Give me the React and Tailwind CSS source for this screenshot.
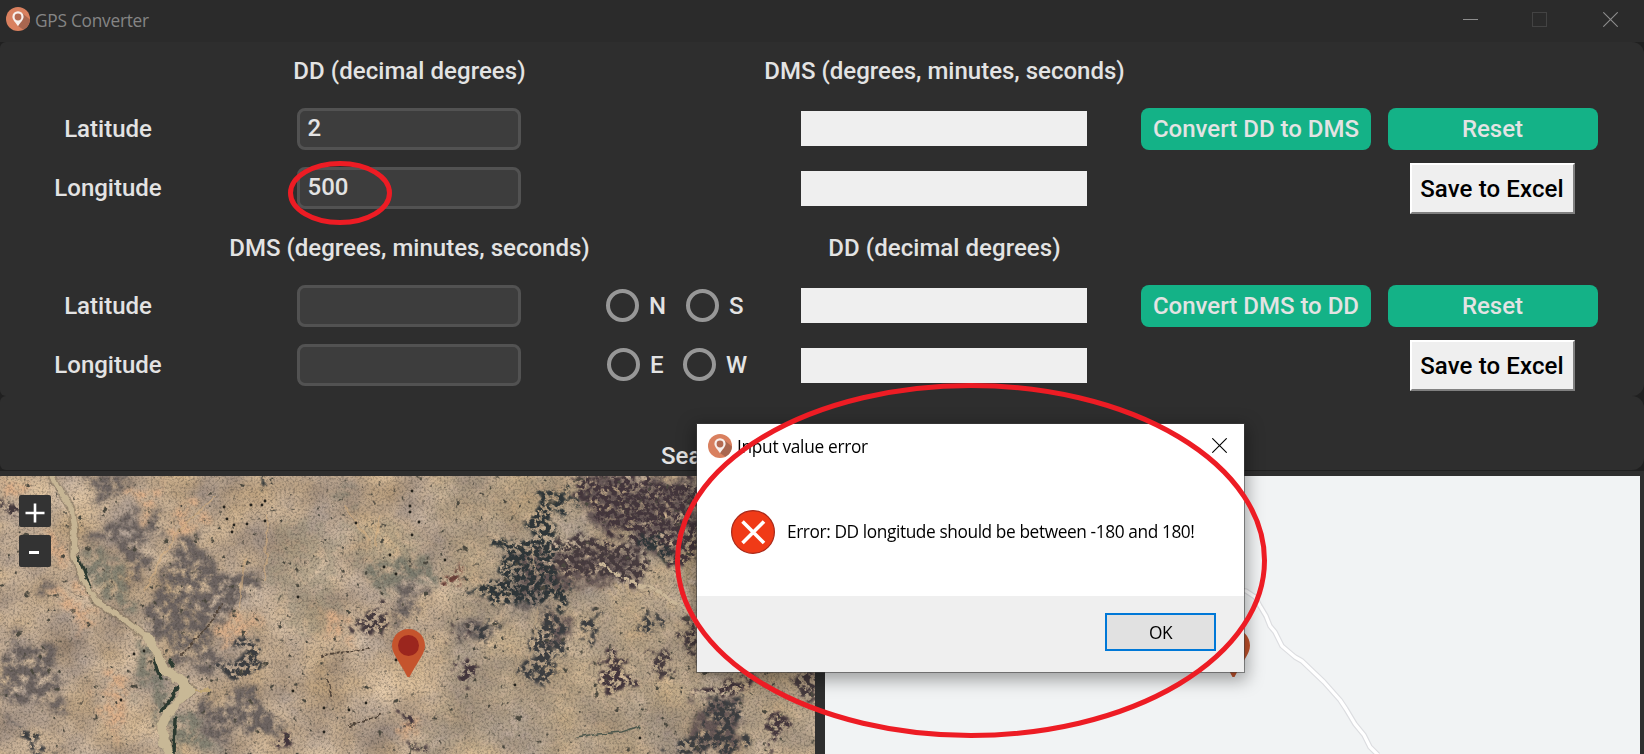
import React from "react";

const SANS = "font-['Open_Sans','Noto_Sans',sans-serif]";

function AppIcon() {
  return (
    <svg className="size-6 shrink-0" viewBox="0 0 24 24">
      <defs>
        <clipPath id="disc"><circle cx="12" cy="12" r="12" /></clipPath>
      </defs>
      <circle cx="12" cy="12" r="12" fill="#d9805f" />
      <path d="M16 6 L26 14 L22 26 L12 19 Z" fill="#a9664f" clipPath="url(#disc)" />
      <path d="M12 19.200 C10 16 6.400 13 6.400 9.800 A5.600 5.600 0 0 1 17.600 9.800 C17.600 13 14 16 12 19.200Z" fill="#f7efec" />
      <circle cx="12" cy="10" r="3.400" fill="#b46a52" />
    </svg>
  );
}

function Cross({ className }) {
  return (
    <svg className={className} viewBox="0 0 15 15" fill="none" stroke="currentColor" strokeWidth="1.100">
      <path d="M.3.3l14.400 14.400M14.700.3L.3 14.700" />
    </svg>
  );
}

function TitleBar() {
  return (
    <header className="flex h-[42px] items-center justify-between bg-[#2b2b2b] pr-[26px] pl-[6px] font-normal">
      <div className="flex items-center gap-[5px] pb-1">
        <AppIcon />
        <span className={`${SANS} pt-[3px] text-[17.300px] leading-6 tracking-[-0.250px] text-[#858585]`}>GPS Converter</span>
      </div>
      <div className="flex items-center pb-[3px] text-[#8d8d8d]">
        <span className="mr-[54px] h-px w-[15px] bg-[#8d8d8d]" />
        <span className="mr-[56px] size-[15px] border border-[#434343]" />
        <Cross className="size-[15px]" />
      </div>
    </header>
  );
}

function Entry({ value = "" }) {
  return (
    <div className="mx-auto flex h-[42px] w-[224px] items-center rounded-lg border-3 border-[#525252] bg-[#3d3d3d] pb-0.5 pl-2">{value}</div>
  );
}

function Output({ className = "" }) {
  return <div className={`mx-auto h-[35px] w-[286px] bg-[#efefef] ${className}`} />;
}

function Radio({ label, className = "" }) {
  return (
    <label className={`flex items-center gap-[10px] ${className}`}>
      <span className="mb-px size-[33px] rounded-full border-4 border-[#979797]" />
      {label}
    </label>
  );
}

function GreenButton({ children, className }) {
  return (
    <button className={`mx-auto h-[42px] rounded-lg bg-[#14b287] text-center ${className}`}>{children}</button>
  );
}

function SaveButton() {
  return (
    <button className="mx-auto h-[51px] w-[165px] border-2 border-t-white border-r-[#808080] border-b-[#808080] border-l-white bg-[#efefef] pt-px pr-px text-center tracking-[0.120px] text-black">
      Save to Excel
    </button>
  );
}

function Converter() {
  return (
    <section className="grid h-[354px] grid-cols-[216px_385px_156px_374px_250px_223px] grid-rows-[57px_60px_58px_60px_58px_60px] items-center rounded-r-xl rounded-l-md bg-[#2e2e2e] whitespace-nowrap">
      <span />
      <h2 className="pl-0.5 text-center tracking-[0.050px]">DD (decimal degrees)</h2>
      <span />
      <h2 className="pl-px text-center">DMS (degrees, minutes, seconds)</h2>
      <span />
      <span />

      <span className="text-center">Latitude</span>
      <Entry value="2" />
      <span />
      <Output className="mb-px" />
      <GreenButton className="w-[230px]">Convert DD to DMS</GreenButton>
      <GreenButton className="w-[210px]">Reset</GreenButton>

      <span className="text-center">Longitude</span>
      <Entry value="500" />
      <span />
      <Output />
      <span />
      <SaveButton />

      <span />
      <h2 className="pt-px pl-0.5 text-center">DMS (degrees, minutes, seconds)</h2>
      <span />
      <h2 className="pt-px pl-px text-center tracking-[0.050px]">DD (decimal degrees)</h2>
      <span />
      <span />

      <span className="text-center">Latitude</span>
      <Entry />
      <div className="flex pl-[5px]">
        <Radio label="N" className="w-20" />
        <Radio label="S" />
      </div>
      <Output className="mb-px" />
      <GreenButton className="w-[230px]">Convert DMS to DD</GreenButton>
      <GreenButton className="w-[210px]">Reset</GreenButton>

      <span className="text-center">Longitude</span>
      <Entry />
      <div className="flex pl-[6px]">
        <Radio label="E" className="w-[76px]" />
        <Radio label="W" />
      </div>
      <Output />
      <span />
      <SaveButton />
    </section>
  );
}

function Pin({ className }) {
  return (
    <svg className={`absolute h-12 w-[33px] ${className}`} viewBox="0 0 33 48">
      <path d="M16.500 0 A16.500 16.500 0 0 1 33 16.500 C33 25 25 33 17.500 48 H15.500 C8 33 0 25 0 16.500 A16.500 16.500 0 0 1 16.500 0Z" fill="#c5542d" />
      <circle cx="16.500" cy="16.500" r="10.500" fill="#9b261e" />
    </svg>
  );
}

const SCRUB = [
  "M90 0H130L122 18L104 26L92 12Z",
  "M88 58L110 48L160 38L168 52L150 62L146 84L138 105L130 96L128 78L110 66L95 72Z",
  "M178 60L196 52L204 72L216 95L240 96L258 92L262 112L236 128L218 150L205 170L188 186L170 178L155 160L148 138L152 112L165 90Z",
  "M190 180L215 172L228 190L215 200L195 198Z",
  "M0 190L20 160L45 165L60 190L52 215L28 240L10 230L0 225Z",
  "M35 112L50 108L48 124L28 120Z",
  "M50 210L70 230L66 244L54 228Z",
  "M196 238L215 222L245 212L275 235L280 262L262 256L240 250L226 266L218 278L205 255Z",
  "M382 145L400 112L420 98L420 130L405 150Z",
  "M450 165L480 145L510 138L490 155L478 168Z",
  "M508 120L548 112L552 136L536 140L512 132Z",
];

const GREENERY = [
  "M80 76L110 80L132 98L130 120L145 150L130 140L104 116L90 112Z",
  "M130 160L152 168L158 200L176 210L165 235L148 250L142 212L135 188Z",
  "M365 90L400 80L420 90L418 120L395 116L372 110Z",
  "M172 240L195 230L205 265L218 278H170Z",
  "M340 10L356 15L352 30L334 20Z",
  "M400 90L420 80L440 85L425 110L405 115Z",
];

const DARK = [
  "M352 148L370 135L392 128L388 148L376 164L362 156Z",
  "M233 182L244 163L258 168L262 180L254 198L238 205L215 202L222 190Z",
  "M570 0H697V88L672 92L660 70L630 65L600 48L590 30Z",
  "M545 66L570 62L600 62L640 70L650 100L640 112L610 100L560 100L545 96Z",
  "M548 135L567 140L565 170L548 178L560 195L545 205L526 208L524 185L535 155Z",
  "M595 186L612 172L625 178L630 200L620 220L604 212Z",
  "M652 178L666 174L674 200L664 198L650 192Z",
  "M582 140L596 134L598 160L588 166Z",
  "M454 190L472 182L478 196L470 212L456 200Z",
  "M448 162L466 150L480 140L478 154L462 160Z",
  "M472 148L500 142L490 160L476 168Z",
  "M690 215L720 205L745 198L765 206L735 218L700 220Z",
  "M792 198H815V228L800 220Z",
  "M708 220L740 228L742 278H670L690 258L712 248Z",
  "M772 236L790 238L782 256L770 278H765Z",
  "M680 138L697 140V190L688 184Z",
  "M640 145L660 135L655 152L628 152Z",
  "M402 242L414 240L412 250L394 252Z",
  "M408 270L425 266L430 278H408Z",
  "M14 250L24 250L45 272L58 278H36Z",
  "M280 254L286 250L288 270L274 276Z",
  "M0 18L14 24L16 38L6 44L0 36Z",
];

const INK = [
  "M530 18L548 14L560 22L575 14L582 20L560 32L550 50L558 64L552 84L548 95L575 112L520 125L478 124L502 100L505 88L498 72L520 58L532 64L530 44L536 30Z",
  "M476 108L520 100L575 116L560 128L500 128L470 122Z",
  "M636 56L668 64L668 90L656 80L640 70Z",
  "M260 0H268V12L262 10Z",
];

const LIGHT = [
  "M0 0H28L20 22L8 16Z",
  "M130 8L165 2L160 24L142 40L132 28Z",
  "M176 30L212 22L200 38L178 58L160 92L146 122L168 74Z",
  "M220 136L262 134L258 158L240 162L226 176L218 160Z",
  "M55 110L88 124L98 145L80 160L70 138L50 118Z",
  "M108 190L134 210L130 240L110 260L98 236Z",
  "M36 60L62 62L66 84L40 82Z",
  "M336 138L350 136L350 160L330 160Z",
  "M400 245L420 242L418 262L398 258Z",
];

const TREES = [[227, 43], [224, 31], [251, 29], [262, 29], [265, 25], [265, 45], [247, 48], [232, 56], [234, 49], [356, 47], [412, 15], [410, 36], [390, 79], [384, 91], [396, 98], [134, 178], [144, 175], [396, 184], [121, 224], [366, 227], [324, 232], [349, 234], [324, 256], [412, 59], [419, 46], [410, 30], [445, 84], [640, 262], [515, 209], [410, 158], [293, 215], [298, 121]];

const RIVER = "M52 0L62 16L71 32L75 60L74 80L83 104L94 122L111 136L129 147L148 162L157 176L164 194L180 204L193 215L180 224L167 238L162 250L163 264L171 280";

function Satellite() {
  return (
    <svg className="block h-full w-full" viewBox="0 0 815 278" preserveAspectRatio="xMinYMin slice">
      <defs>
        <filter id="ground" x="0" y="0" width="100%" height="100%" colorInterpolationFilters="sRGB">
          <feTurbulence type="fractalNoise" baseFrequency="0.02 0.022" numOctaves="7" seed="8" />
          <feColorMatrix values="0.38 0 0 0 0.565  0.32 0.06 0 0 0.475  0.20 0.18 0 0 0.375  0 0 0 0 1" />
        </filter>
        <filter id="grain" x="0" y="0" width="100%" height="100%" colorInterpolationFilters="sRGB">
          <feTurbulence type="fractalNoise" baseFrequency="0.45" numOctaves="3" seed="4" />
          <feColorMatrix values="0 0 0 0 0.24  0 0 0 0 0.22  0 0 0 0 0.2  1 0 0 0 -0.430" />
        </filter>
        <filter id="soft" x="-10%" y="-10%" width="120%" height="120%" colorInterpolationFilters="sRGB">
          <feTurbulence type="fractalNoise" baseFrequency="0.05" numOctaves="5" seed="3" result="n" />
          <feDisplacementMap in="SourceGraphic" in2="n" scale="40" xChannelSelector="R" yChannelSelector="G" result="d" />
          <feGaussianBlur in="d" stdDeviation="2" result="b" />
          <feTurbulence type="fractalNoise" baseFrequency="0.11" numOctaves="5" seed="7" result="m" />
          <feColorMatrix in="m" values="0 0 0 0 0  0 0 0 0 0  0 0 0 0 0  2.800 0 0 0 -0.650" result="mask" />
          <feComposite in="b" in2="mask" operator="in" />
        </filter>
        <filter id="speckle" x="-10%" y="-10%" width="120%" height="120%" colorInterpolationFilters="sRGB">
          <feTurbulence type="fractalNoise" baseFrequency="0.07" numOctaves="5" seed="11" result="n" />
          <feDisplacementMap in="SourceGraphic" in2="n" scale="34" xChannelSelector="R" yChannelSelector="G" result="d" />
          <feGaussianBlur in="d" stdDeviation="1.200" result="b" />
          <feTurbulence type="fractalNoise" baseFrequency="0.2" numOctaves="4" seed="21" result="m" />
          <feColorMatrix in="m" values="0 0 0 0 0  0 0 0 0 0  0 0 0 0 0  7 0 0 0 -2.850" result="mask" />
          <feComposite in="b" in2="mask" operator="in" />
        </filter>
        <filter id="wobble" x="-10%" y="-10%" width="120%" height="120%" colorInterpolationFilters="sRGB">
          <feTurbulence type="fractalNoise" baseFrequency="0.09" numOctaves="3" seed="5" result="n" />
          <feDisplacementMap in="SourceGraphic" in2="n" scale="7" xChannelSelector="R" yChannelSelector="G" />
        </filter>
        <filter id="scatter" x="0" y="0" width="100%" height="100%" colorInterpolationFilters="sRGB">
          <feTurbulence type="fractalNoise" baseFrequency="0.13" numOctaves="3" seed="31" />
          <feColorMatrix values="0 0 0 0 0.3  0 0 0 0 0.29  0 0 0 0 0.25  9 0 0 0 -6.300" />
        </filter>
      </defs>
      <rect width="815" height="278" filter="url(#ground)" />
      <g filter="url(#soft)">
        <path d="M430 0H815V278H420L450 160Z" fill="#9d9177" opacity=".4" />
        <path d="M280 40L340 60L330 150L300 160L270 110Z M340 50L420 50V88L360 90Z" fill="#9d9680" opacity=".5" />
        {LIGHT.map((d) => <path key={d} d={d} fill="#dcb08a" />)}
        {GREENERY.map((d) => <path key={d} d={d} fill="#7a7b6d" opacity=".85" />)}
        {SCRUB.map((d) => <path key={d} d={d} fill="#6e6562" />)}
        <path d="M540 100L560 85L640 105L690 130L640 122Z" fill="#c9b08d" />
        <path d="M676 60L697 54V124L684 110Z" fill="#b09a7a" />
      </g>
      <g filter="url(#soft)" opacity=".85">
        <path d="M570 0H697V60L668 84L600 48Z M506 76L640 70L640 104L520 116Z M700 226H740V278H684Z M548 140H566V172H546Z" fill="#5b4d50" />
      </g>
      <g filter="url(#speckle)">
        {DARK.map((d, i) => <path key={d} d={d} fill={i % 3 === 0 ? "#463a3e" : i % 3 === 1 ? "#3b3d40" : "#43353c"} />)}
        {INK.map((d) => <path key={d} d={d} fill="#2d3538" />)}
        <path d="M437 106L464 86L462 98L444 114Z" fill="#6d3f38" />
      </g>
      <rect width="815" height="278" filter="url(#scatter)" />
      <rect width="815" height="278" filter="url(#grain)" />
      <g fill="none" strokeLinecap="round" strokeLinejoin="round" filter="url(#wobble)">
        <path d="M215 22L180 52L160 85L145 115M244 84L240 130M268 40L265 104M380 40L375 70M345 30L370 65" stroke="#d2ad80" strokeWidth="2" opacity=".6" />
        <path d="M600 88L625 104L655 114L690 135" stroke="#cbb899" strokeWidth="3" strokeDasharray="5 4" />
        <path d="M532 70L536 98M538 132L530 190" stroke="#baa384" strokeWidth="2" opacity=".7" />
        <path d="M322 180L340 176L368 172M350 250L382 238M180 178L208 152L222 128M328 204L330 220" stroke="#514439" strokeWidth="2" strokeDasharray="2 3" />
        <path d="M576 262L600 258L622 256L640 250" stroke="#4d574c" strokeWidth="1.600" />
        <path d={RIVER} stroke="#7d7059" strokeWidth="9" opacity=".5" />
        <path d="M78 82L85 98L90 112M154 182L157 194L161 202M179 210L170 224L160 236M169 184L173 192M175 242L174 278" stroke="#2c3a30" strokeWidth="3.500" />
        <path d={RIVER} stroke="#c6b594" strokeWidth="5.500" />
        <path d="M148 162L157 176L164 194L180 204L190 215L180 224L167 238L162 250L163 264L171 280" stroke="#c8b896" strokeWidth="9" />
        <path d="M182 206L193 215L180 224Z" fill="#c8b896" stroke="#c8b896" strokeWidth="4" />
        <path d="M195 214H212" stroke="#c3a973" strokeWidth="1.500" />
      </g>
      {TREES.map(([x, y]) => <circle key={`${x}-${y}`} cx={x} cy={y} r="1.400" fill="#25231d" />)}
    </svg>
  );
}

function ZoomButton({ children }) {
  return <button className="flex size-8 items-center justify-center rounded-xs bg-[#333]">{children}</button>;
}

function Maps() {
  return (
    <section className="mt-px flex h-[283px] gap-[10px] bg-[#2e2e2e] pt-[5px]">
      <div className="relative h-[278px] w-[815px] overflow-hidden">
        <Satellite />
        <div className="absolute top-[19px] left-[19px] flex flex-col gap-2">
          <ZoomButton>
            <svg className="mt-[3px] mr-px size-5" viewBox="0 0 20 20"><path d="M10 .5v19M.5 10h19" stroke="white" strokeWidth="2.600" /></svg>
          </ZoomButton>
          <ZoomButton>
            <span className="mt-[3px] mr-[2px] h-[3px] w-[10px] bg-white" />
          </ZoomButton>
        </div>
        <Pin className="top-[153px] left-[392px]" />
      </div>
      <div className="relative h-[278px] w-[815px] overflow-hidden bg-[#f1f3f4]">
        <svg className="block h-full w-full" viewBox="825 476 815 278" fill="none" strokeLinejoin="round">
          {["#dcdde0", "#ffffff"].map((color, i) => (
            <path
              key={color}
              d="M1200 586L1230 589L1246 591L1255 597L1260 606L1266 616L1270 626L1275 632L1282 646L1295 657L1302 661L1324 682L1340 700L1346 709L1355 724L1364 735L1370 747L1378 755"
              stroke={color}
              strokeWidth={i === 0 ? 5.5 : 3.2}
            />
          ))}
        </svg>
        <Pin className="top-[153px] left-[392px]" />
      </div>
    </section>
  );
}

function ErrorDialog() {
  return (
    <div role="dialog" className={`${SANS} absolute top-[424px] left-[697px] flex h-[248px] w-[547px] flex-col bg-white text-[17.300px] leading-6 font-normal whitespace-nowrap text-black shadow-[0_0_0_1px_rgba(60,60,60,.55),0_5px_16px_3px_rgba(0,0,0,.35)]`}>
      <div className="flex items-center justify-between pt-[8px] pr-[17px] pl-[11px]">
        <div className="flex items-center gap-[5px]">
          <AppIcon />
          <span className="pt-[3px] tracking-[-0.300px]">Input value error</span>
        </div>
        <Cross className="size-[15px]" />
      </div>
      <div className="flex grow items-center gap-[12px] pt-[9px] pl-[34px]">
        <svg className="size-11" viewBox="0 0 44 44">
          <circle cx="22" cy="22" r="21.400" fill="#f03a17" stroke="#a8291a" strokeWidth="1.200" />
          <path d="M11.500 11.500l21.500 21.500M33 11.500L11.500 33" stroke="white" strokeWidth="3.600" />
        </svg>
        <span className="tracking-[-0.400px]">Error: DD longitude should be between -180 and 180!</span>
      </div>
      <div className="flex h-[76px] items-start justify-end bg-[#efefef] pt-[17px] pr-7">
        <button className="h-[38px] w-[111px] border-2 border-[#0078d7] bg-[#e1e1e1] pt-px tracking-[-0.500px]">OK</button>
      </div>
    </div>
  );
}

export default function App() {
  return (
    <div className="relative h-[754px] w-[1644px] overflow-hidden bg-[#202020] font-[Roboto,sans-serif] text-2xl leading-7 font-medium text-[#e3e3e3]">
      <TitleBar />
      <Converter />
      <section className="flex h-[74px] items-end rounded-r-xl rounded-l-md bg-[#2e2e2e] pl-[661px]">
        <span>Search</span>
      </section>
      <Maps />
      <ErrorDialog />
      <svg className="pointer-events-none absolute inset-0 h-full w-full" viewBox="0 0 1644 754" fill="none" stroke="#ed1c24" strokeWidth="5">
        <ellipse cx="340" cy="193" rx="49.500" ry="29.500" />
        <ellipse cx="971" cy="560.500" rx="293.500" ry="175" />
      </svg>
    </div>
  );
}
